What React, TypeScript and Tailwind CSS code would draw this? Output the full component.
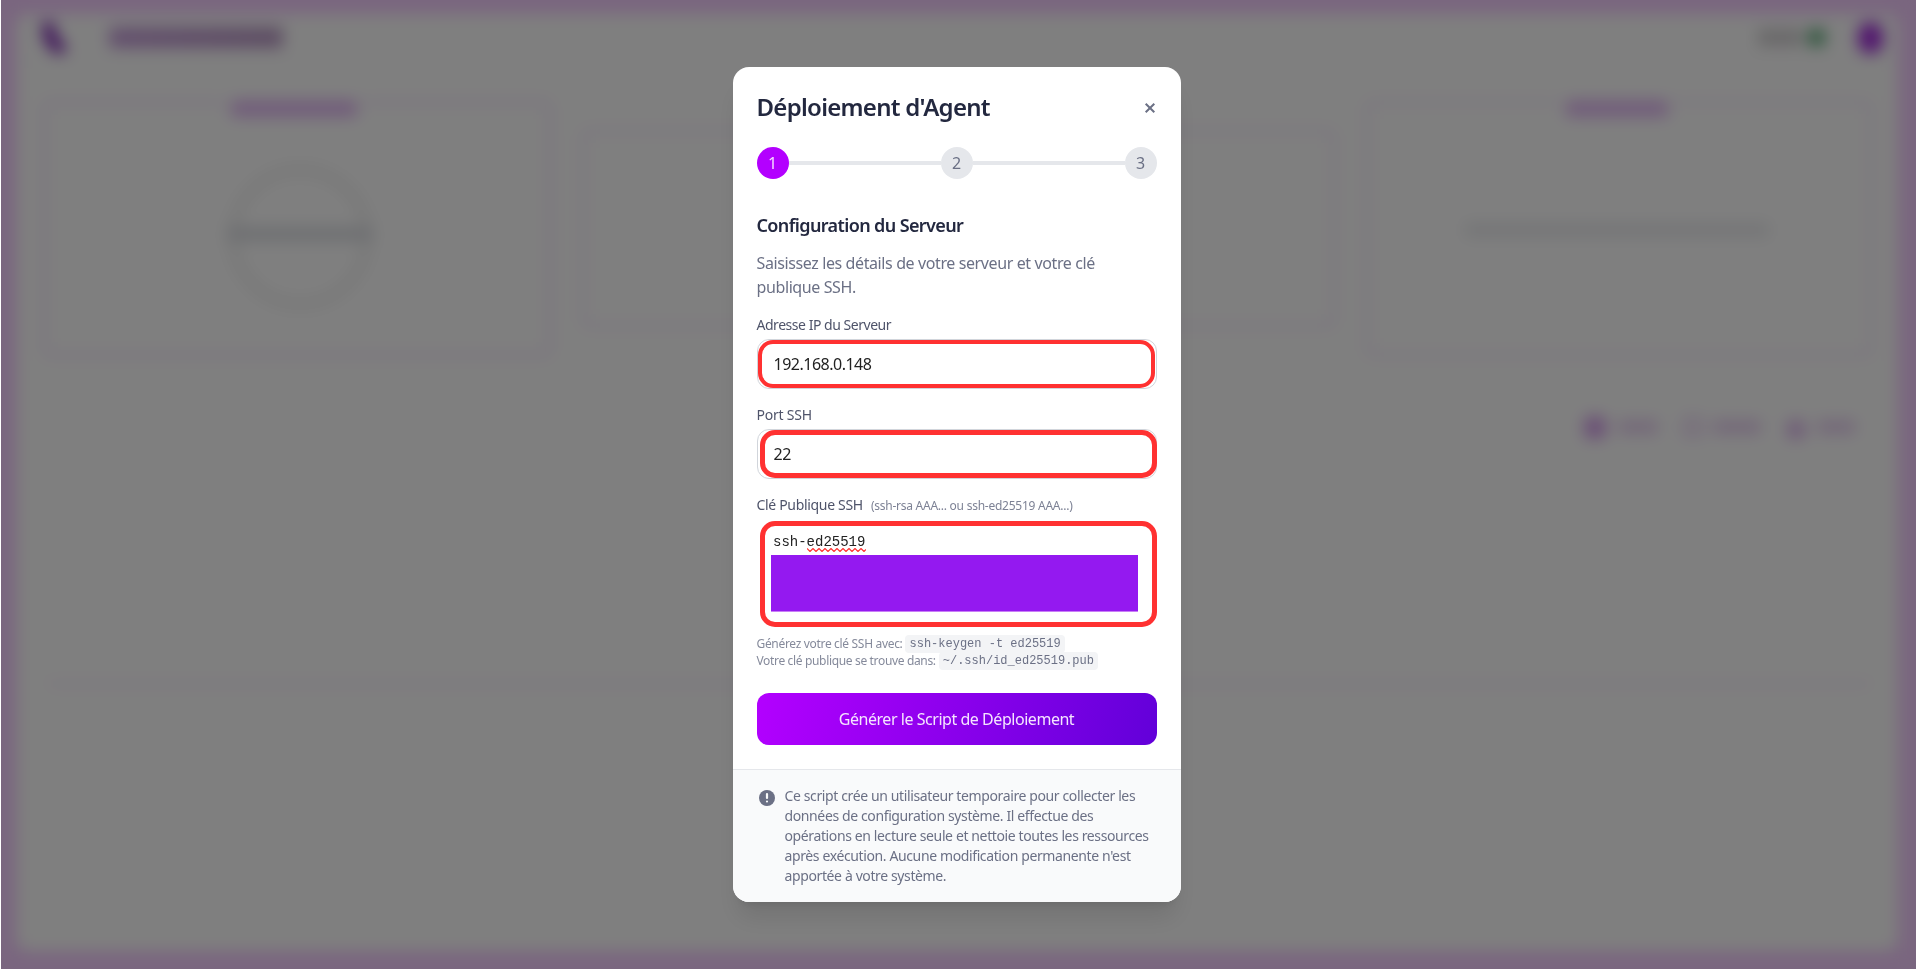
import React from "react";

const sans = "font-['Noto_Sans','Open_Sans',sans-serif]";
const mono = "font-['Liberation_Mono',monospace]";

function Dashboard() {
  return (
    <div className="flex h-full w-full bg-[#f4ccff] pt-[14px] pr-[18px] pb-[18px] pl-[16px]">
      <div className="flex min-w-0 flex-1 flex-col rounded-xl bg-white">
        <header className="flex h-[48px] items-center border-b border-[#f0f0f0] pr-[15px] pl-[24px]">
          <svg width="28" height="34" viewBox="0 0 28 34">
            <path d="M2 1 L13 1 L17 16 L27 26 L22 33 L14 32 L4 20 Z" fill="#7d22b4" />
          </svg>
          <div className="ml-[41px] h-[21px] w-[174px] rounded bg-gradient-to-r from-[#c8a0dc] to-[#ba9ac6]" />
          <div className="ml-auto flex items-center">
            <div className="h-[17px] w-[44px] bg-[#d2d0d2]" />
            <div className="ml-[5px] size-[19px] rounded-full bg-[#5cab78]" />
            <div className="ml-[32px] h-[32px] w-[25px] rounded-full bg-[#a32bdc]" />
          </div>
        </header>
        <div className="flex items-start gap-[29px] pt-[38px] pr-[25px] pl-[26px]">
          <section className="flex h-[257px] w-[510px] flex-col items-center rounded-lg border-4 border-[#f3dffa]">
            <div className="-mt-[4px] mr-[6px] h-[17px] w-[126px] bg-[#e3b8f5] shadow-[0_0_0_7px_white]" />
            <div className="mt-[48px] ml-[6px] flex h-[144px] w-[144px] items-center justify-center rounded-full border-[10px] border-[#f0f0f0]">
              <div className="mb-[7px] h-[14px] w-[146px] shrink-0 bg-[#dcdee3]" />
            </div>
          </section>
          <section className="mt-[29px] h-[199px] min-w-0 flex-1 rounded-lg border-4 border-[#f5e4fb]" />
          <section className="flex h-[257px] w-[508px] flex-col items-center rounded-lg border-4 border-[#f5e4fb]">
            <div className="-mt-[4px] mr-[4px] h-[17px] w-[102px] bg-[#e3b8f5] shadow-[0_0_0_7px_white]" />
            <div className="mt-[106px] mr-[4px] h-[14px] w-[304px] bg-[#eaebee]" />
          </section>
        </div>
        <section className="mt-[30px] mr-[26px] ml-[30px] h-[299px] rounded-lg border-b-4 border-[#f5e4fb]">
          <div className="flex h-[80px] items-center justify-end pr-[17px]">
            <div className="h-[23px] w-[22px] rounded-md bg-[#d6a0ec]" />
            <div className="ml-[12px] h-[14px] w-[40px] bg-[#e8d0f2]" />
            <div className="ml-[25px] h-[20px] w-[20px] rounded border-4 border-[#e4c4f2]" />
            <div className="ml-[10px] h-[14px] w-[48px] bg-[#e8d0f2]" />
            <div className="mt-[5px] ml-[26px] h-[19px] w-[18px] rounded bg-[#dfb8ef]" />
            <div className="ml-[12px] h-[14px] w-[38px] bg-[#e8d0f2]" />
          </div>
        </section>
      </div>
    </div>
  );
}

function Step({ n, active = false }: { n: number; active?: boolean }) {
  return (
    <div
      className={
        active
          ? "flex size-8 items-center justify-center rounded-full bg-[#b300ff] text-base text-[#f5dcff]"
          : "flex size-8 items-center justify-center rounded-full bg-[#e5e7eb] text-base text-[#6b7085]"
      }
    >
      {n}
    </div>
  );
}

function Modal() {
  return (
    <div className="flex h-[835px] w-[448px] flex-col overflow-hidden rounded-2xl bg-white text-[#6b7085] shadow-[0_20px_25px_-5px_rgba(0,0,0,0.1),0_8px_10px_-6px_rgba(0,0,0,0.1)]">
      <div className="flex flex-1 flex-col px-6 pt-6">
        <div className="flex h-8 items-center justify-between">
          <h2 className="text-2xl font-semibold tracking-[-0.72px] whitespace-nowrap text-[#23283f]">Déploiement d'Agent</h2>
          <svg width="14" height="14" viewBox="0 0 14 14" className="mt-0.5" stroke="#6b7085" strokeWidth="2">
            <path d="M2.7 2.7l8.6 8.6M11.3 2.7l-8.6 8.6" />
          </svg>
        </div>
        <div className="mt-6 flex items-center">
          <Step n={1} active />
          <div className="h-1 flex-1 bg-[#e5e7eb]" />
          <Step n={2} />
          <div className="h-1 flex-1 bg-[#e5e7eb]" />
          <Step n={3} />
        </div>
        <h3 className="mt-8 text-lg leading-7 font-semibold tracking-[-0.62px] whitespace-nowrap text-[#23283f]">Configuration du Serveur</h3>
        <p className="mt-3 text-base leading-6 tracking-[-0.39px] whitespace-nowrap">
          Saisissez les détails de votre serveur et votre clé
          <br />
          publique SSH.
        </p>
        <label className="mt-4 text-sm leading-5 tracking-[-0.47px] whitespace-nowrap text-[#4f546a]">Adresse IP du Serveur</label>
        <div className="relative mt-1 flex h-[50px] items-center rounded-xl border border-[#d1d5db] px-4 text-base text-black">
          <span className="tracking-[-0.5px] text-[#222]">192.168.0.148</span>
          <div className="absolute top-0 left-[0.5px] h-[48px] w-[397px] rounded-[15px] border-4 border-[#ff3131]" />
        </div>
        <label className="mt-4 text-sm leading-5 tracking-[-0.23px] whitespace-nowrap text-[#4f546a]">Port SSH</label>
        <div className="relative mt-1 flex h-[50px] items-center rounded-xl border border-[#d1d5db] px-4 text-base text-black">
          <span className="tracking-[-0.5px] text-[#222]">22</span>
          <div className="absolute top-0 left-[2.5px] h-[48px] w-[397px] rounded-[15px] border-5 border-[#ff3131]" />
        </div>
        <div className="mt-4 flex h-5 items-center whitespace-nowrap">
          <label className="text-sm leading-5 tracking-[-0.32px] text-[#4f546a]">Clé Publique SSH</label>
          <span className="ml-2 pt-px text-xs tracking-[-0.25px] text-[#7d8295]">(ssh-rsa AAA... ou ssh-ed25519 AAA...)</span>
        </div>
        <div className="mt-[6px] ml-[3.5px] flex h-[106px] w-[397px] flex-col rounded-[15px] border-5 border-[#ff3131] pl-[6px]">
          <div className={`mt-[6px] flex h-5 pl-[2px] text-sm leading-5 text-[#222] ${mono}`}>
            <span>ssh-</span>
            <span className="relative">
              ed25519
              <svg className="absolute top-[16px] left-0" width="59" height="4" viewBox="0 0 59 4" fill="none" stroke="#ff3131" strokeWidth="1.2">
                <path d="M0 .5L3 3.5L6 .5L9 3.5L12 .5L15 3.5L18 .5L21 3.5L24 .5L27 3.5L30 .5L33 3.5L36 .5L39 3.5L42 .5L45 3.5L48 .5L51 3.5L54 .5L57 3.5L59 1.5" />
              </svg>
            </span>
          </div>
          <div className="mt-[3px] h-[57px] w-[367px] border-b border-[#c97ef7] bg-[#9419f0]" />
        </div>
        <div className="mt-2 text-xs whitespace-nowrap text-[#858a9b]">
          <div className="flex h-[17px] items-center">
            <span className="tracking-[-0.32px]">Générez votre clé SSH avec:</span>
            <code className={`ml-[3px] h-[18px] rounded bg-[#f3f4f6] px-1 leading-[18px] text-[#6b7085] ${mono}`}>ssh-keygen -t ed25519</code>
          </div>
          <div className="flex h-[17px] items-center">
            <span className="tracking-[-0.34px]">Votre clé publique se trouve dans:</span>
            <code className={`ml-[3px] h-[18px] rounded bg-[#f3f4f6] px-1 leading-[18px] text-[#6b7085] ${mono}`}>~/.ssh/id_ed25519.pub</code>
          </div>
        </div>
        <button className="mt-6 h-[52px] rounded-xl bg-[linear-gradient(105deg,#b300ff,#6200d9)] text-base tracking-[-0.46px] whitespace-nowrap text-[#f5e4ff]">
          Générer le Script de Déploiement
        </button>
      </div>
      <div className="flex h-[133px] items-start gap-2 border-t border-[#e5e7eb] bg-[#f9fafb] px-6 pt-4">
        <svg width="20" height="20" viewBox="0 0 20 20" className="mt-0.5 shrink-0">
          <circle cx="10" cy="10" r="8" fill="#6b7085" />
          <path d="M10 6v4M10 13.5v.01" stroke="#f9fafb" strokeWidth="2.2" strokeLinecap="round" />
        </svg>
        <p className="text-sm leading-5 tracking-[-0.38px] whitespace-nowrap">
          Ce script crée un utilisateur temporaire pour collecter les
          <br />
          données de configuration système. Il effectue des
          <br />
          opérations en lecture seule et nettoie toutes les ressources
          <br />
          après exécution. Aucune modification permanente n'est
          <br />
          apportée à votre système.
        </p>
      </div>
    </div>
  );
}

export default function App() {
  return (
    <div className={`relative h-[969px] w-[1916px] overflow-hidden bg-white ${sans}`}>
      <Dashboard />
      <div className="absolute inset-y-0 right-0 left-px flex justify-center bg-black/50 pt-[67px] pr-[4px] backdrop-blur-sm">
        <Modal />
      </div>
      <div className="absolute inset-y-0 left-0 w-px bg-white" />
    </div>
  );
}
